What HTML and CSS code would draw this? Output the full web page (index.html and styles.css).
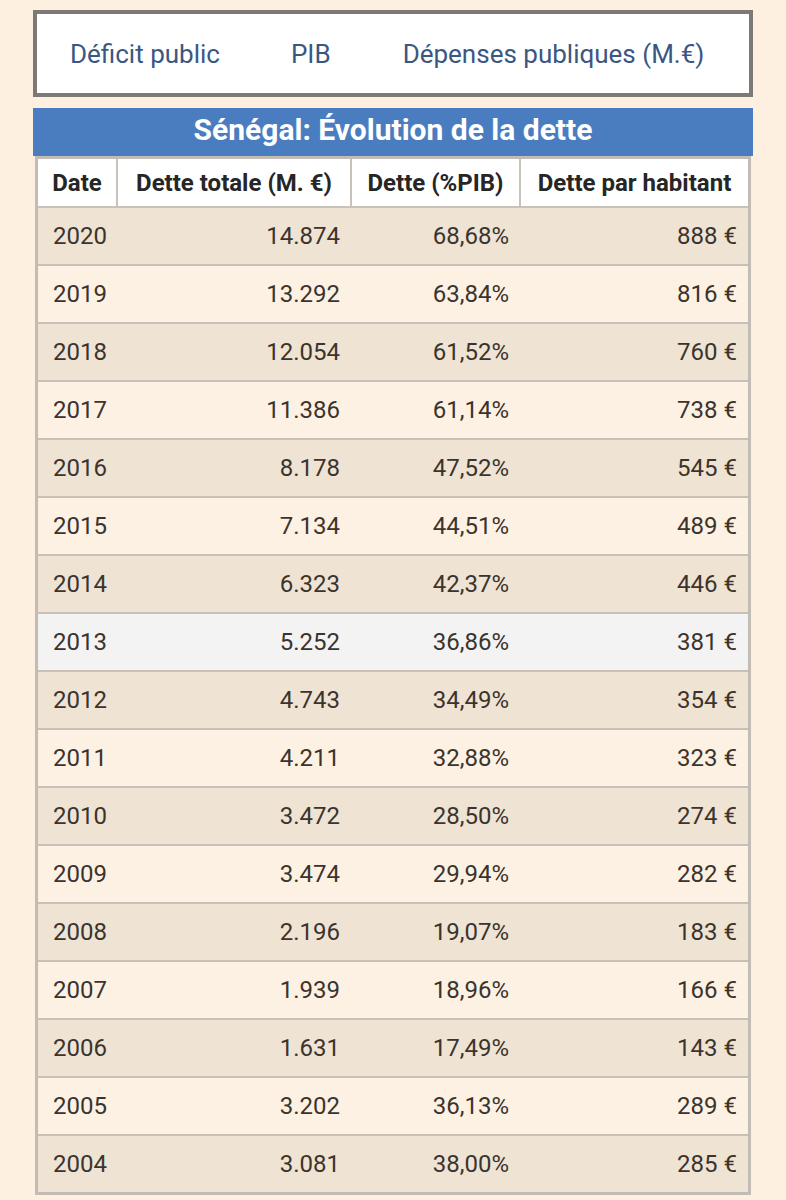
FILE: index.html
```html
<!DOCTYPE html>
<html lang="fr">
<head>
<meta charset="utf-8">
<title>Sénégal: Évolution de la dette</title>
<link rel="stylesheet" href="styles.css">
</head>
<body>
<div class="page">
  <nav class="tabs">
    <a class="tab tab-deficit" href="#">Déficit public</a>
    <a class="tab tab-pib" href="#">PIB</a>
    <a class="tab tab-dep" href="#">Dépenses publiques (M.€)</a>
  </nav>
  <h2 class="title">Sénégal: Évolution de la dette</h2>
  <table class="debt">
    <thead>
      <tr>
        <th class="c-date">Date</th>
        <th class="c-total">Dette totale (M. €)</th>
        <th class="c-pib">Dette (%PIB)</th>
        <th class="c-hab">Dette par habitant</th>
      </tr>
    </thead>
    <tbody>
      <tr class="odd"><td>2020</td><td class="num">14.874</td><td class="num">68,68%</td><td class="num">888 €</td></tr>
      <tr class="even"><td>2019</td><td class="num">13.292</td><td class="num">63,84%</td><td class="num">816 €</td></tr>
      <tr class="odd"><td>2018</td><td class="num">12.054</td><td class="num">61,52%</td><td class="num">760 €</td></tr>
      <tr class="even"><td>2017</td><td class="num">11.386</td><td class="num">61,14%</td><td class="num">738 €</td></tr>
      <tr class="odd"><td>2016</td><td class="num">8.178</td><td class="num">47,52%</td><td class="num">545 €</td></tr>
      <tr class="even"><td>2015</td><td class="num">7.134</td><td class="num">44,51%</td><td class="num">489 €</td></tr>
      <tr class="odd"><td>2014</td><td class="num">6.323</td><td class="num">42,37%</td><td class="num">446 €</td></tr>
      <tr class="hover"><td>2013</td><td class="num">5.252</td><td class="num">36,86%</td><td class="num">381 €</td></tr>
      <tr class="odd"><td>2012</td><td class="num">4.743</td><td class="num">34,49%</td><td class="num">354 €</td></tr>
      <tr class="even"><td>2011</td><td class="num">4.211</td><td class="num">32,88%</td><td class="num">323 €</td></tr>
      <tr class="odd"><td>2010</td><td class="num">3.472</td><td class="num">28,50%</td><td class="num">274 €</td></tr>
      <tr class="even"><td>2009</td><td class="num">3.474</td><td class="num">29,94%</td><td class="num">282 €</td></tr>
      <tr class="odd"><td>2008</td><td class="num">2.196</td><td class="num">19,07%</td><td class="num">183 €</td></tr>
      <tr class="even"><td>2007</td><td class="num">1.939</td><td class="num">18,96%</td><td class="num">166 €</td></tr>
      <tr class="odd"><td>2006</td><td class="num">1.631</td><td class="num">17,49%</td><td class="num">143 €</td></tr>
      <tr class="even"><td>2005</td><td class="num">3.202</td><td class="num">36,13%</td><td class="num">289 €</td></tr>
      <tr class="odd"><td>2004</td><td class="num">3.081</td><td class="num">38,00%</td><td class="num">285 €</td></tr>
    </tbody>
  </table>
</div>
</body>
</html>
```

FILE: styles.css
```css
html, body {
  margin: 0;
  padding: 0;
  background: #fdf0e1;
}
body {
  font-family: Roboto, "Liberation Sans", sans-serif;
  height: 1200px;
  overflow: hidden;
}
.page {
  width: 720px;
  margin-left: 33px;
  padding-top: 10px;
}
.tabs {
  display: flex;
  align-items: center;
  height: 79px;
  border: 4px solid #7e7975;
  background: #ffffff;
  padding-left: 33px;
}
.tab {
  color: #3a5782;
  text-decoration: none;
  font-size: 26px;
  line-height: 30px;
}
.tab-pib { margin-left: 71px; }
.tab-dep { margin-left: 72px; }
.title {
  margin: 11px 0 0 0;
  height: 48px;
  line-height: 44px;
  background: #4a7dc0;
  color: #ffffff;
  font-size: 30px;
  font-weight: 700;
  text-align: center;
}
.debt {
  width: 716px;
  margin-left: 2px;
  table-layout: fixed;
  border-collapse: collapse;
  border: 3px solid #c2bcb5;
  color: #3b342d;
}
.debt th {
  background: #ffffff;
  color: #262626;
  font-size: 24px;
  font-weight: 700;
  height: 47px;
  padding: 0 8px;
  border: 2px solid #c8c2bb;
  text-align: center;
  white-space: nowrap;
}
.debt th.c-date { width: 62px; }
.debt th.c-total { width: 216px; }
.debt th.c-pib { width: 151px; }
.debt td {
  font-size: 24px;
  height: 56px;
  padding: 0 11px 0 15px;
  border-top: 2px solid #c8c0b6;
  border-bottom: 2px solid #c8c0b6;
}
.debt td.num { text-align: right; }
.debt tr.odd td { background: #efe3d4; }
.debt tr.even td { background: #fdf1e3; }
.debt tr.hover td { background: #f3f3f3; }
```
